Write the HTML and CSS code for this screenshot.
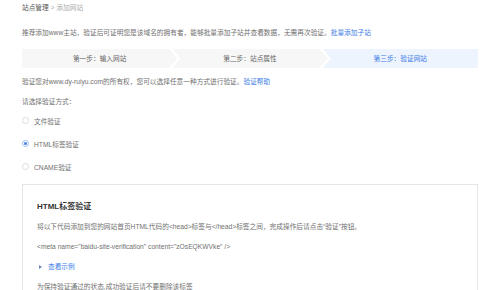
FILE: index.html
```html
<!DOCTYPE html>
<html lang="zh">

<head>
  <meta charset="UTF-8">
  <meta name="viewport" content="width=device-width, initial-scale=1.0">
  <title>添加网站</title>
  <link rel="stylesheet" href="styles.css">
</head>

<body>
  <div class="page">
    <div class="crumb"><span class="crumb-root">站点管理</span> &gt; 添加网站</div>
    <p class="tip">推荐添加www主站，验证后可证明您是该域名的拥有者，能够批量添加子站并查看数据，无需再次验证。<a href="#">批量添加子站</a></p>

    <div class="steps">
      <div class="step first">第一步：输入网站</div>
      <div class="step">第二步：站点属性</div>
      <div class="step last active">第三步：验证网站</div>
    </div>

    <p class="line">验证您对www.dy-ruiyu.com的所有权，您可以选择任意一种方式进行验证。<a href="#">验证帮助</a></p>
    <p class="choose">请选择验证方式：</p>

    <div class="methods">
      <label class="method"><span class="radio"></span>文件验证</label>
      <label class="method"><span class="radio checked"></span>HTML标签验证</label>
      <label class="method"><span class="radio"></span>CNAME验证</label>
    </div>

    <div class="panel">
      <h3>HTML标签验证</h3>
      <p>将以下代码添加到您的网站首页HTML代码的&lt;head&gt;标签与&lt;/head&gt;标签之间，完成操作后请点击“验证”按钮。</p>
      <p>&lt;meta name="baidu-site-verification" content="zOsEQKWVke" /&gt;</p>
      <p class="example"><span class="arrow"></span><a href="#">查看示例</a></p>
      <p>为保持验证通过的状态,成功验证后请不要删除该标签</p>
    </div>
  </div>
</body>

</html>
```

FILE: styles.css
```css
body,
html {
  margin: 0;
  font-family: "Liberation Sans", "Noto Sans CJK SC", sans-serif;
  font-size: 6.7px;
  color: #707070;
  background: #fff;
}

p {
  margin: 0;
}

a {
  color: #3c7de6;
  text-decoration: none;
}

.page {
  padding: 0 22px;
}

.crumb {
  line-height: 16px;
  color: #aaa;
}

.crumb-root {
  color: #555;
}

.tip {
  margin-top: 7px;
  line-height: 20px;
}

.steps {
  display: flex;
  margin-top: 6px;
  height: 19px;
}

.step {
  flex: 1;
  line-height: 19px;
  text-align: center;
  background-color: #f7f7f7;
  color: #666;
  margin-left: -5px;
  clip-path: polygon(0 0, calc(100% - 8px) 0, 100% 50%, calc(100% - 8px) 100%, 0 100%, 8px 50%);
}

.step.first {
  margin-left: 0;
  clip-path: polygon(0 0, calc(100% - 8px) 0, 100% 50%, calc(100% - 8px) 100%, 0 100%);
}

.step.last {
  clip-path: polygon(0 0, 100% 0, 100% 100%, 0 100%, 8px 50%);
}

.step.active {
  background-color: #eef4fd;
  color: #3c7de6;
}

.line {
  margin-top: 4px;
  line-height: 20px;
}

.choose {
  margin-top: 3px;
  line-height: 14px;
}

.methods {
  display: flex;
  flex-direction: column;
}

.method {
  display: flex;
  align-items: center;
  height: 23px;
}

.radio {
  width: 5px;
  height: 5px;
  margin-right: 5px;
  border: 1px solid #ddd;
  border-radius: 50%;
  position: relative;
}

.radio.checked {
  border-color: #9dbcf0;
}

.radio.checked::after {
  content: "";
  position: absolute;
  left: 1px;
  top: 1px;
  width: 3px;
  height: 3px;
  border-radius: 50%;
  background-color: #3c7de6;
}

.panel {
  margin-top: 6px;
  border: 1px solid #e6e6e6;
  padding: 12px 14px 10px;
}

.panel h3 {
  margin: 0;
  font-size: 8px;
  line-height: 20px;
  color: #333;
}

.panel p {
  line-height: 20px;
}

.example {
  display: flex;
  align-items: center;
}

.arrow {
  width: 0;
  height: 0;
  margin: 0 6px 0 2px;
  border-top: 2px solid transparent;
  border-bottom: 2px solid transparent;
  border-left: 3px solid #6a86b8;
}
```
